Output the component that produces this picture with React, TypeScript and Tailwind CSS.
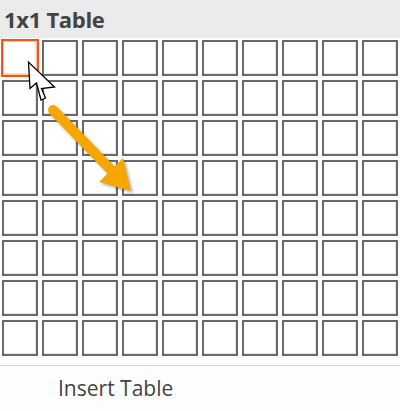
import React from "react";

const ROWS = 8;
const COLS = 10;

const Cell = ({ selected }: { selected: boolean }) => (
  <div className="relative h-[36px] w-[36px] border-2 border-[#6a6a6a] bg-white shadow-[inset_-1px_-1px_0_#e4e4e4]">
    {selected && (
      <span className="absolute -inset-[3px] border-2 border-[#f2541b] shadow-[inset_0_0_0_1px_#fbc9a6]" />
    )}
  </div>
);

export default function App() {
  const cells = Array.from({ length: ROWS * COLS }, (_, i) => i);

  return (
    <div className="relative h-[411px] w-[400px] overflow-hidden bg-[#fdfdfd] font-['Open_Sans','Liberation_Sans',sans-serif]">
      <div className="flex h-[38px] items-center bg-[#ebebeb] pl-[4px]">
        <span className="text-[22px] font-bold tracking-[-0.3px] text-[#444444]">1x1 Table</span>
      </div>

      <div className="grid grid-cols-[repeat(10,36px)] gap-[4px] px-[2px] pt-[2px]">
        {cells.map((i) => (
          <Cell key={i} selected={i === 0} />
        ))}
      </div>

      <div className="mt-[9px] h-px bg-[#d6d6d6]" />

      <div className="flex h-[45px] items-center pl-[58px]">
        <span className="text-[21px] text-[#444444]">Insert Table</span>
      </div>

      {/* mouse pointer and hint arrow drawn over the grid */}
      <svg
        className="pointer-events-none absolute left-0 top-0"
        width="400"
        height="411"
        viewBox="0 0 400 411"
      >
        <g className="drop-shadow-[2px_2px_1.5px_rgba(0,0,0,0.3)]">
          <line x1="53" y1="110" x2="113" y2="172" stroke="#f5a700" strokeWidth="10" strokeLinecap="round" />
          <polygon points="131,191 99,182 123,158" fill="#f5a700" />
        </g>
        <path
          d="M28.5 62 L30 88.5 L36.5 83 L41 100 L45.5 98 L41.5 88.5 L54.5 87 Z"
          fill="#ffffff"
          stroke="#000000"
          strokeWidth="1.3"
          strokeLinejoin="miter"
        />
      </svg>
    </div>
  );
}
